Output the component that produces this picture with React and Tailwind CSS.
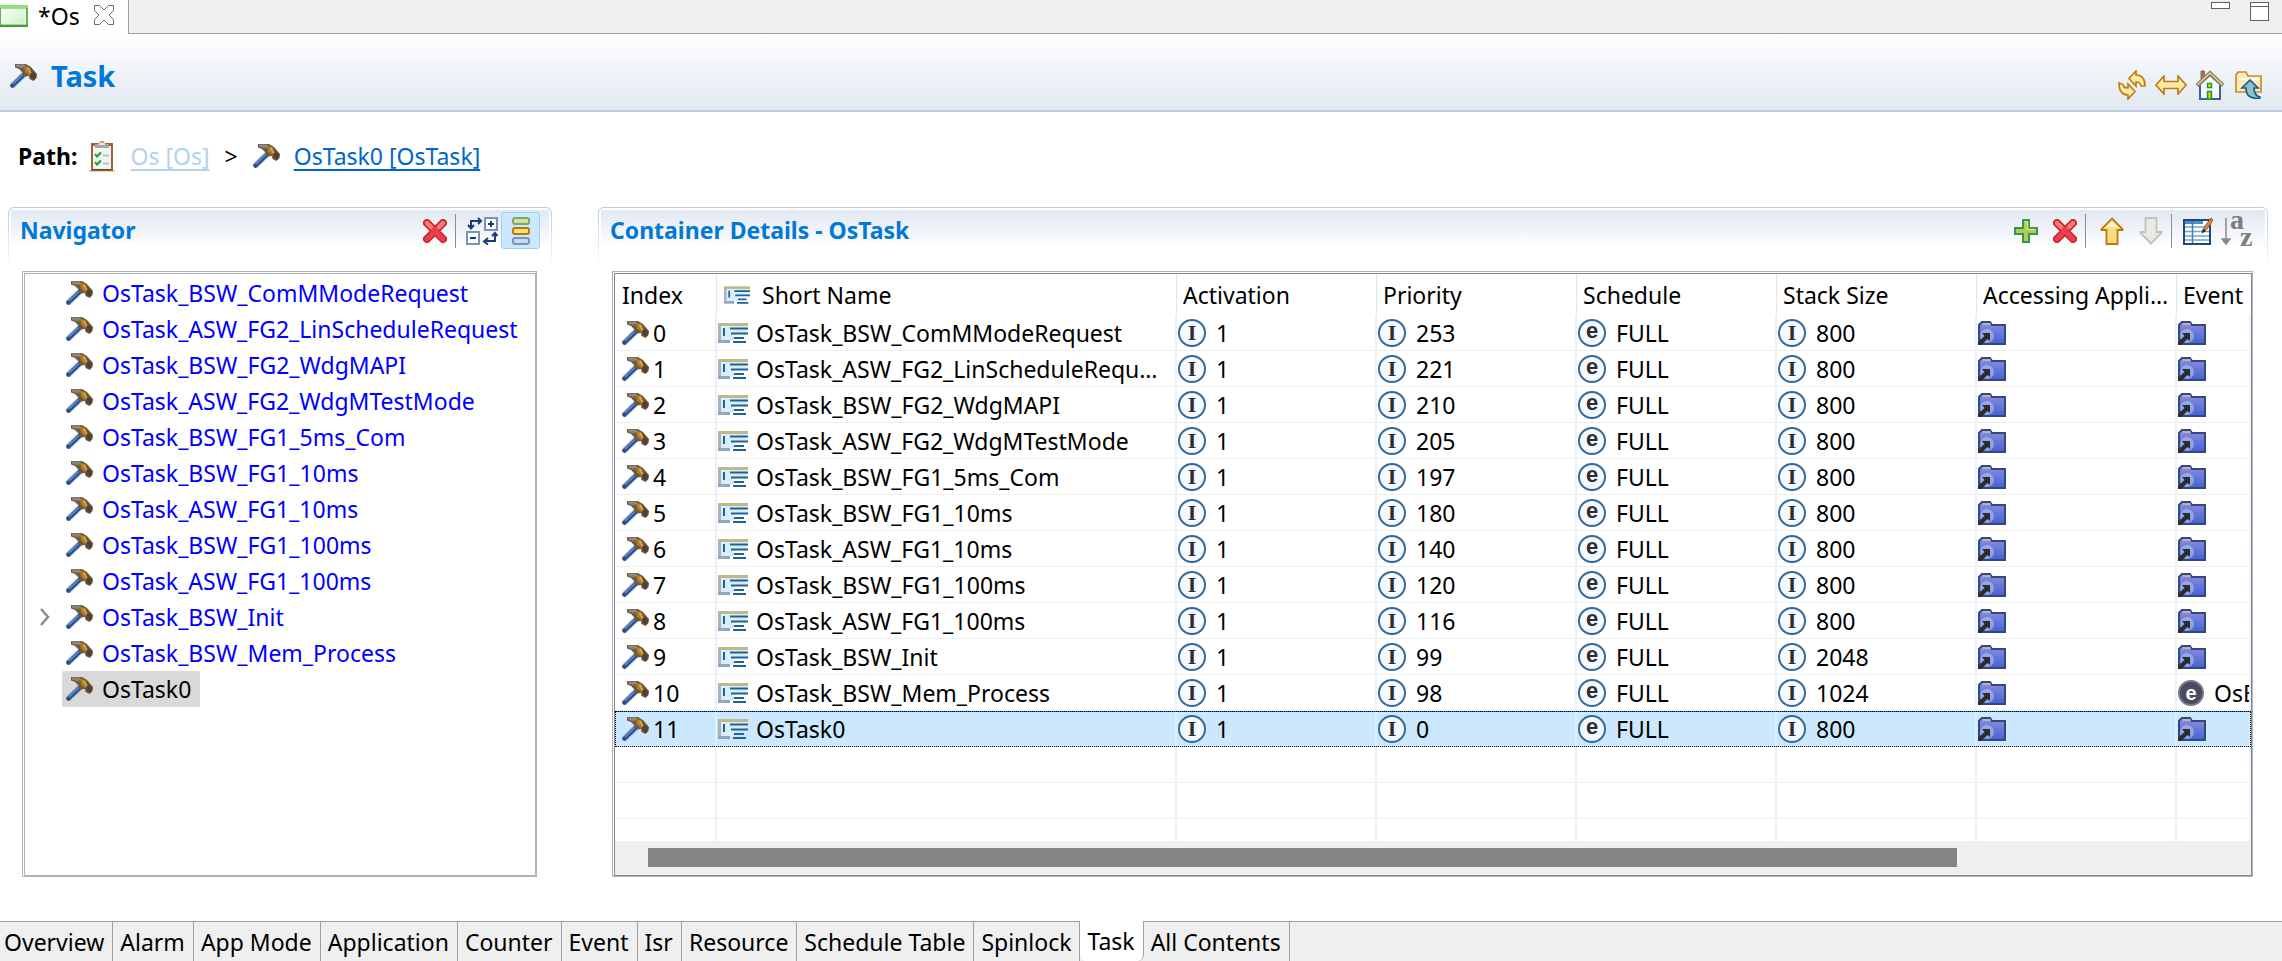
import React, { useState } from "react";

const tasks = [
  { name: "OsTask_BSW_ComMModeRequest", priority: 253, stack: 800 },
  { name: "OsTask_ASW_FG2_LinScheduleRequest", priority: 221, stack: 800 },
  { name: "OsTask_BSW_FG2_WdgMAPI", priority: 210, stack: 800 },
  { name: "OsTask_ASW_FG2_WdgMTestMode", priority: 205, stack: 800 },
  { name: "OsTask_BSW_FG1_5ms_Com", priority: 197, stack: 800 },
  { name: "OsTask_BSW_FG1_10ms", priority: 180, stack: 800 },
  { name: "OsTask_ASW_FG1_10ms", priority: 140, stack: 800 },
  { name: "OsTask_BSW_FG1_100ms", priority: 120, stack: 800 },
  { name: "OsTask_ASW_FG1_100ms", priority: 116, stack: 800 },
  { name: "OsTask_BSW_Init", priority: 99, stack: 2048, expandable: true },
  { name: "OsTask_BSW_Mem_Process", priority: 98, stack: 1024, event: "OsE" },
  { name: "OsTask0", priority: 0, stack: 800 },
];

const pages = [
  "Overview",
  "Alarm",
  "App Mode",
  "Application",
  "Counter",
  "Event",
  "Isr",
  "Resource",
  "Schedule Table",
  "Spinlock",
  "Task",
  "All Contents",
];

/* ---------- Icons ---------- */

const HammerIcon = () => (
  <svg className="w-[27px] h-6 shrink-0" viewBox="0 0 27 24" aria-hidden="true">
    <path d="M1 23 15 9.5" stroke="#8795b4" strokeWidth="6" opacity="0.6" />
    <path d="M1 23 15.5 9" stroke="#2a4c8c" strokeWidth="4" />
    <path d="M3 20 13 10.5" stroke="#5f93cb" strokeWidth="1.5" />
    <path d="M5 0h11l5 3 6 7-0.500 4-3 3-4-2-0.500-3-4.500 0.500-2.500-4.500-3-3-4-1.500z" fill="#6e5a42" />
    <path d="M6 0.500h8l2 2-4 1.500-5.500-1z" fill="#8e877d" />
    <path d="M14 2l5 1 4.500 6-4 2.500-4.500-4z" fill="#b07d22" />
    <path d="M20 5l6.500 6-2 5-4-2z" fill="#563f33" />
    <path d="M17.500 4l3.500 5" stroke="#dba940" strokeWidth="2" />
  </svg>
);

const FileIcon = () => (
  <svg className="w-7 h-[22px]" viewBox="0 0 28 22" aria-hidden="true">
    <defs>
      <linearGradient id="file" x1="0" y1="0" x2="1" y2="1">
        <stop offset="0" stopColor="#fbfffa" />
        <stop offset="1" stopColor="#cdf0c6" />
      </linearGradient>
    </defs>
    <rect width="28" height="22" fill="#5cb648" />
    <rect width="28" height="3" fill="#8fe07c" />
    <rect width="28" height="2" y="20" fill="#4a9a3c" />
    <rect x="1.500" y="4" width="24" height="15" fill="url(#file)" stroke="#e9fbe5" />
  </svg>
);

const CloseIcon = () => (
  <svg className="w-5 h-5" viewBox="0 0 20 20" fill="#fff" stroke="#6b6b6b" aria-hidden="true">
    <path d="M0.500 0.500h5l4.500 4.500 4.500-4.500h5v5l-4.500 4.500 4.500 4.500v5h-5l-4.500-4.500-4.500 4.500h-5v-5l4.500-4.500-4.500-4.500z" />
  </svg>
);

const ClipboardIcon = () => (
  <svg className="w-7 h-8" viewBox="0 0 28 32" aria-hidden="true">
    <path d="M1 31h26" stroke="#d5cfc9" strokeWidth="2" />
    <rect x="3" y="3" width="22" height="28" fill="#a85f2e" />
    <rect x="5" y="6" width="18" height="23" fill="#eef6f4" />
    <path d="M5 29.500h18" stroke="#6b3d1e" />
    <path d="M7 8V4h4l1-3h4l1 3h4v4z" fill="#a9a7a6" />
    <path d="M11 4h6" stroke="#e8e8e8" strokeWidth="2" />
    <path d="M7 14l2 2.500 4-4M7 22l2 2.500 4-4" fill="none" stroke="#1f9a22" strokeWidth="2" />
    <path d="M15 15.500h6M15 23.500h6" stroke="#b5c4c0" strokeWidth="2" />
  </svg>
);

const SyncIcon = () => (
  <svg className="w-7 h-[30px]" viewBox="0 0 28 30" fill="#fdeaa8" stroke="#bd7f14" strokeWidth="1.700" aria-hidden="true">
    <path d="M11 8.500 18 1v4c5 0 9 3 9 11h-4c-0.500-3-2-4-5-4v4z" />
    <path d="M17 21.500 10 29v-4c-5 0-9-3-9-12l4 1.500c0.500 3 2 3.500 5 3.500v-4z" />
  </svg>
);

const LinkArrowsIcon = () => (
  <svg className="w-8 h-5" viewBox="0 0 32 20" fill="#fdeaa8" stroke="#bd7f14" strokeWidth="1.700" aria-hidden="true">
    <path d="M1 10 9 1v5.500h14V1l8 9-8 9v-5.500H9V19z" />
  </svg>
);

const HomeIcon = () => (
  <svg className="w-7 h-[30px]" viewBox="0 0 28 30" aria-hidden="true">
    <path d="M5 1h3.500v8H5z" fill="#b9695b" stroke="#8a6b50" />
    <path d="M4 14 14 5l10 9v15H4z" fill="#f4f9fd" stroke="#3c5fa5" strokeWidth="2" />
    <path d="M1 15.500 14 3l13 12.500" fill="none" stroke="#8d7b5a" strokeWidth="4" />
    <path d="M1.500 15 14 3l12.500 12" fill="none" stroke="#e6cf97" strokeWidth="1.500" />
    <rect x="11.500" y="13.500" width="4" height="4" fill="#e8e800" stroke="#2f8f3a" strokeWidth="1.500" />
    <rect x="11.500" y="21.500" width="4" height="7.500" fill="#b8dc10" stroke="#2f8f3a" strokeWidth="1.500" />
  </svg>
);

const FolderUpIcon = () => (
  <svg className="w-7 h-7" viewBox="0 0 28 28" aria-hidden="true">
    <path d="M1 21V4l2-3h8l2 4h13v16z" fill="#fdeab5" stroke="#c98a35" strokeWidth="1.700" />
    <path d="M3 8h22" stroke="#fff7dc" strokeWidth="2" />
    <path d="M15 9l8 8h-4c0 5 2 8 6 9v1c-8 1-14-1-14-10H7z" fill="#8cc3bd" stroke="#165f9c" strokeWidth="1.700" />
  </svg>
);

const DeleteIcon = () => (
  <svg className="w-6 h-6" viewBox="0 0 24 24" strokeLinecap="round" aria-hidden="true">
    <path d="M4 4l16 16M20 4 4 20" stroke="#c9252f" strokeWidth="8" />
    <path d="M4 4l16 16M20 4 4 20" stroke="#ee3d4a" strokeWidth="5" />
    <path d="M4 4l4 4M20 4l-4 4" stroke="#f58078" strokeWidth="4" />
  </svg>
);

const AddIcon = () => (
  <svg className="w-6 h-6" viewBox="0 0 24 24" aria-hidden="true">
    <path d="M9 1h6v8h8v6h-8v8H9v-8H1V9h8z" fill="#a9cf52" stroke="#3f8f58" strokeWidth="2" />
    <path d="M10.500 3h3v7.500H21" fill="none" stroke="#dbe86a" strokeWidth="1.500" />
  </svg>
);

const ExpandIcon = () => (
  <svg className="w-8 h-7" viewBox="0 0 32 28" fill="none" aria-hidden="true">
    <rect x="19" y="1" width="12" height="12" fill="#fff" stroke="#8291ad" strokeWidth="2" />
    <rect x="1" y="15" width="12" height="12" fill="#fff" stroke="#8291ad" strokeWidth="2" />
    <path d="M22 7h6M25 4v6M4 21h6" stroke="#0d4076" strokeWidth="2" />
    <path d="M5 11V4h9M2 8l3 3.500L8 8M12 1l3 3-3 3" stroke="#183b78" strokeWidth="2" />
    <path d="M29 17v7h-9M22 21l-4 3.500 4 3M26 19l3-3 2.500 3" stroke="#183b78" strokeWidth="2" />
  </svg>
);

const LayersIcon = () => (
  <svg className="w-[18px] h-7" viewBox="0 0 18 28" strokeWidth="2" aria-hidden="true">
    <rect x="1" y="1" width="16" height="6" rx="2" fill="#d5e38e" stroke="#78a878" />
    <rect x="1" y="11" width="16" height="6" rx="2" fill="#ffe27a" stroke="#b07c10" />
    <rect x="1" y="21" width="16" height="6" rx="2" fill="#c7dbee" stroke="#7d94b9" />
  </svg>
);

const MoveUpIcon = () => (
  <svg className="w-6 h-7" viewBox="0 0 24 28" aria-hidden="true">
    <path d="M12 1.500 22.500 12v1H17.500v14h-11V13H1.500v-1z" fill="#fddc82" stroke="#b97a10" strokeWidth="1.800" />
    <path d="M12 4l6 6H6z" fill="#fff4cc" />
  </svg>
);

const MoveDownIcon = () => (
  <svg className="w-6 h-7" viewBox="0 0 24 28" aria-hidden="true">
    <path d="M12 26.500 1.500 16v-1h5V1h11v14h5v1z" fill="#ebe9e4" stroke="#c2c0bb" strokeWidth="1.800" />
  </svg>
);

const EditTableIcon = () => (
  <svg className="w-[30px] h-7" viewBox="0 0 30 28" aria-hidden="true">
    <rect x="1" y="3" width="26" height="24" fill="#fff" stroke="#24457f" strokeWidth="2" />
    <path d="M2 5.500h18" stroke="#4d8fc0" strokeWidth="3" />
    <path d="M2 10h24M2 14.500h24M2 19h24M2 23h24" stroke="#6fa3cb" strokeWidth="1.500" />
    <path d="M9.500 4v22" stroke="#3f7fb5" strokeWidth="1.500" />
    <path d="M20 15l2-6 6-8 2 2-5 8z" fill="#d8893b" stroke="#9b5c28" />
    <path d="M18.500 16.500l1.500-5 3 2.500z" fill="#222" />
  </svg>
);

const SortIcon = () => (
  <svg className="w-8 h-8" viewBox="0 0 32 32" fill="#7d7d7d" aria-hidden="true">
    <path d="M5 3v24M1 24h8l-4 5z" stroke="#8a8a8a" strokeWidth="1.500" />
    <text x="9" y="14" fontFamily="Liberation Serif, serif" fontWeight="bold" fontSize="28">a</text>
    <text x="19" y="31" fontFamily="Liberation Serif, serif" fontWeight="bold" fontSize="28">z</text>
  </svg>
);

const NameIcon = ({ small }) => (
  <svg className={small ? "w-[26px] h-[18px] shrink-0" : "w-[30px] h-5 shrink-0"} viewBox="0 0 30 20" aria-hidden="true">
    <path d="M3 3h26v8H16v6H3z" fill="#d8eef8" />
    <path d="M1.500 2v17" stroke="#a9b3bd" strokeWidth="3" />
    <path d="M0 18.500h12" stroke="#93a4c0" strokeWidth="3" />
    <path d="M0 1.500h30" stroke="#bfb887" strokeWidth="3" />
    <path d="M6 5v8M12 5.500h18M13 10.500h17M16 15h10M15 19h13" stroke="#1f6297" strokeWidth="2" />
  </svg>
);

const FolderLinkIcon = () => (
  <svg className="w-7 h-6" viewBox="0 0 28 24" aria-hidden="true">
    <defs>
      <linearGradient id="folder" x1="0" y1="0" x2="0" y2="1">
        <stop offset="0" stopColor="#8f8ede" />
        <stop offset="1" stopColor="#4263d3" />
      </linearGradient>
    </defs>
    <path d="M1 23V4l3-3h8l2 3h13v19z" fill="url(#folder)" stroke="#34477f" strokeWidth="2" />
    <path d="M4.500 3h8" stroke="#b9b4b0" strokeWidth="2" />
    <circle cx="9" cy="15" r="7" fill="#9fb1ee" opacity="0.800" />
    <path d="M4 12h8v8l-2.500-2L3 24H0v-3l6.500-6z" fill="#2c2c2e" />
  </svg>
);

const EventIcon = () => (
  <span className="flex w-[26px] h-[26px] shrink-0 items-center justify-center rounded-full bg-[#4b4a60] font-['Liberation_Sans',sans-serif] text-[20px] leading-none font-bold text-white border-2 border-[#77768a]">
    e
  </span>
);

const TypeBadge = ({ children, serif }) => (
  <span
    className={`flex w-7 h-7 shrink-0 items-center justify-center rounded-full border-2 border-[#33699c] bg-[#f4faff] text-[22px] leading-none font-bold text-[#2e2e30] ${
      serif ? "font-['Liberation_Serif',serif]" : "font-['Liberation_Sans',sans-serif] pb-1"
    }`}
  >
    {children}
  </span>
);

/* ---------- Building blocks ---------- */

const ToolButton = ({ label, active, children }) => (
  <button
    type="button"
    aria-label={label}
    title={label}
    className={`flex w-[39px] h-[37px] items-center justify-center rounded-[3px] border ${
      active ? "border-[#99d1ff] bg-[#cce8ff]" : "border-transparent"
    }`}
  >
    {children}
  </button>
);

const Divider = () => <span className="w-px h-[34px] ml-px mr-1.5 bg-[#8d8d8d]" />;

const Section = ({ title, tools, className, children }) => (
  <section className={`flex flex-col min-h-0 min-w-0 ${className}`}>
    <div className="h-16 shrink-0 rounded-t-md bg-linear-to-b from-[#b8cbdf] to-white p-px to-95%">
      <div className="h-full rounded-t-[5px] bg-white p-[2px]">
        <div className="flex h-full items-start justify-between bg-linear-to-b from-[#e1e8f1] to-white to-65% px-[9px]">
          <h2 className="pt-[5px] text-[23px] leading-[30px] font-bold text-[#0078d7]">{title}</h2>
          <div className="flex items-center pt-[2px]">{tools}</div>
        </div>
      </div>
    </div>
    {/* Sunken frame around the section body */}
    <div className="mr-[15px] ml-[14px] flex min-h-0 flex-1 flex-col border border-[#abb3bc] pt-px pl-px">{children}</div>
  </section>
);

const App = () => {
  const [page, setPage] = useState("Task");
  const [selected, setSelected] = useState(11);

  const th = "border-r border-[#e5e5e5] pr-[6px] text-left font-normal truncate";
  const cell = "flex items-center pl-px";

  const rowStyle = (index) =>
    index === selected
      ? "bg-[#cce8ff] border-t border-t-[#1979ca] border-b border-b-[#cce8ff] border-r-2 border-r-[#dff0fd]"
      : "border-b border-b-[#efefef] border-r-2 border-r-[#eef1f7]";

  return (
    <div className="flex h-screen flex-col overflow-hidden bg-white font-['Noto_Sans','Noto_Sans_CJK_KR',sans-serif] text-[23px] leading-[30px] text-black">
      {/* Editor tab */}
      <div className="flex h-[34px] shrink-0 bg-[#efefef]">
        <div className="flex w-[129px] items-center border-r border-[#a0a0a0] bg-white pb-[2px]">
          <FileIcon />
          <span className="pl-[10px]">*Os</span>
          <button type="button" aria-label="Close editor" className="ml-auto mr-[14px] mb-[2px]">
            <CloseIcon />
          </button>
        </div>
        <div className="flex flex-1 items-start justify-end gap-5 border-b border-[#a0a0a0] pr-[13px] pt-[2px]">
          <button type="button" aria-label="Minimize" className="w-[19px] h-[7px] border border-[#606060] bg-white" />
          <button type="button" aria-label="Maximize" className="flex w-[19px] h-[19px] items-start border border-[#606060] bg-white">
            <span className="h-1 flex-1 border-b border-[#606060]" />
          </button>
        </div>
      </div>

      {/* Form heading */}
      <header className="flex h-[78px] shrink-0 items-start justify-between border-b-2 border-[#bccde0] bg-linear-to-b from-white to-[#e1e8f1] pl-[10px] pr-[14px]">
        <div className="flex items-center gap-[14px] pt-6">
          <HammerIcon />
          <h1 className="text-[29px] leading-[36px] font-bold text-[#0078d7]">Task</h1>
        </div>
        <div className="flex pt-8">
          <ToolButton label="Refresh"><SyncIcon /></ToolButton>
          <ToolButton label="Link with editor"><LinkArrowsIcon /></ToolButton>
          <ToolButton label="Home"><HomeIcon /></ToolButton>
          <ToolButton label="Up to parent"><FolderUpIcon /></ToolButton>
        </div>
      </header>

      {/* Breadcrumb */}
      <nav aria-label="Path" className="flex h-[87px] shrink-0 items-center px-[18px]">
        <span className="font-bold">Path:</span>
        <span className="pl-[11px]">
          <ClipboardIcon />
        </span>
        <a href="#os" className="ml-[14px] text-[#b3d2f0] underline underline-offset-4">Os [Os]</a>
        <span className="px-[15px]">&gt;</span>
        <HammerIcon />
        <a href="#ostask0" className="ml-[14px] text-[#0066cc] underline underline-offset-4">OsTask0 [OsTask]</a>
      </nav>

      <main className="flex min-h-0 flex-1 gap-[46px] pt-2 pr-[14px] pb-11 pl-2">
        <Section
          title="Navigator"
          className="w-[544px] shrink-0"
          tools={
            <>
              <ToolButton label="Delete"><DeleteIcon /></ToolButton>
              <Divider />
              <ToolButton label="Expand all"><ExpandIcon /></ToolButton>
              <ToolButton label="Group items" active><LayersIcon /></ToolButton>
            </>
          }
        >
          <ul className="min-h-0 flex-1 overflow-hidden border border-[#abb3bc] pt-px">
            {tasks.map((task, index) => (
              <li key={task.name} className="flex h-9 items-center pl-3">
                {task.expandable ? (
                  <button type="button" aria-label={`Expand ${task.name}`} className="w-[25px] pl-[3px]">
                    <svg className="w-[10px] h-[18px]" viewBox="0 0 10 18" fill="none" aria-hidden="true">
                      <path d="M1 1l7 8-7 8" stroke="#8c8c8c" strokeWidth="2.500" />
                    </svg>
                  </button>
                ) : (
                  <span className="w-[25px]" />
                )}
                <button
                  type="button"
                  onClick={() => setSelected(index)}
                  className={`flex h-9 items-center gap-[9px] rounded-[2px] pl-1 pr-[9px] ${
                    index === selected ? "bg-[#d9d9d9]" : ""
                  } ${index === 11 ? "text-black" : "text-[#0000ff]"}`}
                >
                  <HammerIcon />
                  {task.name}
                </button>
              </li>
            ))}
          </ul>
        </Section>

        <Section
          title="Container Details - OsTask"
          className="flex-1"
          tools={
            <>
              <ToolButton label="Add"><AddIcon /></ToolButton>
              <ToolButton label="Delete"><DeleteIcon /></ToolButton>
              <Divider />
              <ToolButton label="Move up"><MoveUpIcon /></ToolButton>
              <ToolButton label="Move down"><MoveDownIcon /></ToolButton>
              <Divider />
              <ToolButton label="Edit columns"><EditTableIcon /></ToolButton>
              <ToolButton label="Sort"><SortIcon /></ToolButton>
            </>
          }
        >
          <div className="flex min-h-0 flex-1 flex-col border border-[#828790]">
            <div className="min-h-0 flex-1 overflow-hidden">
              <table className="w-full table-fixed border-separate border-spacing-0">
                <colgroup>
                  <col className="w-[102px]" />
                  <col />
                  <col className="w-[200px]" />
                  <col className="w-[200px]" />
                  <col className="w-[200px]" />
                  <col className="w-[200px]" />
                  <col className="w-[200px]" />
                  <col className="w-[74px]" />
                </colgroup>
                <thead>
                  <tr className="h-[41px]">
                    <th className={`${th} pl-[7px]`}>Index</th>
                    <th className={`${th} pl-[7px]`}>
                      <span className="flex items-center gap-3">
                        <NameIcon small />
                        Short Name
                      </span>
                    </th>
                    <th className={`${th} pl-[6px]`}>Activation</th>
                    <th className={`${th} pl-[6px]`}>Priority</th>
                    <th className={`${th} pl-[6px]`}>Schedule</th>
                    <th className={`${th} pl-[6px]`}>Stack Size</th>
                    <th className={`${th} pl-[6px]`}>Accessing Applications</th>
                    <th className="overflow-hidden pl-[6px] text-left font-normal">Event</th>
                  </tr>
                </thead>
                <tbody>
                  {tasks.map((task, index) => (
                    <tr
                      key={task.name}
                      onClick={() => setSelected(index)}
                      className={`h-9 ${index === selected ? "outline-1 outline-dotted outline-black -outline-offset-1" : ""}`}
                    >
                      <td className={rowStyle(index)}>
                        <div className="flex items-center gap-1 pl-[7px]">
                          <HammerIcon />
                          {index}
                        </div>
                      </td>
                      <td className={rowStyle(index)}>
                        <div className={`${cell} gap-2 pr-4`}>
                          <NameIcon />
                          <span className="truncate">{task.name}</span>
                        </div>
                      </td>
                      <td className={rowStyle(index)}>
                        <div className={`${cell} gap-[10px]`}>
                          <TypeBadge serif>I</TypeBadge>1
                        </div>
                      </td>
                      <td className={rowStyle(index)}>
                        <div className={`${cell} gap-[10px]`}>
                          <TypeBadge serif>I</TypeBadge>
                          {task.priority}
                        </div>
                      </td>
                      <td className={rowStyle(index)}>
                        <div className={`${cell} gap-[10px]`}>
                          <TypeBadge>e</TypeBadge>FULL
                        </div>
                      </td>
                      <td className={rowStyle(index)}>
                        <div className={`${cell} gap-[10px]`}>
                          <TypeBadge serif>I</TypeBadge>
                          {task.stack}
                        </div>
                      </td>
                      <td className={rowStyle(index)}>
                        <div className={cell}>
                          <FolderLinkIcon />
                        </div>
                      </td>
                      <td className={`${rowStyle(index)} border-r-0 overflow-hidden`}>
                        <div className={`${cell} gap-[10px]`}>
                          {task.event ? (
                            <>
                              <EventIcon />
                              {task.event}
                            </>
                          ) : (
                            <FolderLinkIcon />
                          )}
                        </div>
                      </td>
                    </tr>
                  ))}
                  {/* Unused grid rows below the data */}
                  {[12, 13, 14].map((row) => (
                    <tr key={row} className="h-9">
                      {[0, 1, 2, 3, 4, 5, 6, 7].map((col) => (
                        <td key={col} className={`${rowStyle(row)} ${col === 7 ? "border-r-0" : ""}`} />
                      ))}
                    </tr>
                  ))}
                </tbody>
              </table>
            </div>
            <div className="h-[34px] shrink-0 bg-[#efefef] py-[7px]">
              <div className="ml-[2%] h-[19px] w-[80%] bg-[#848484]" />
            </div>
          </div>
        </Section>
      </main>

      {/* Editor pages */}
      <footer className="flex h-10 shrink-0 bg-[#efefef]">
        {pages.map((name) => (
          <button
            key={name}
            type="button"
            onClick={() => setPage(name)}
            className={`shrink-0 border-r border-[#a0a0a0] pl-[7px] pr-2 first:pl-1 ${
              page === name ? "rounded-b-md bg-white" : "border-t"
            }`}
          >
            {name}
          </button>
        ))}
        <span className="flex-1 border-t border-[#a0a0a0]" />
      </footer>
    </div>
  );
};

export default App;
